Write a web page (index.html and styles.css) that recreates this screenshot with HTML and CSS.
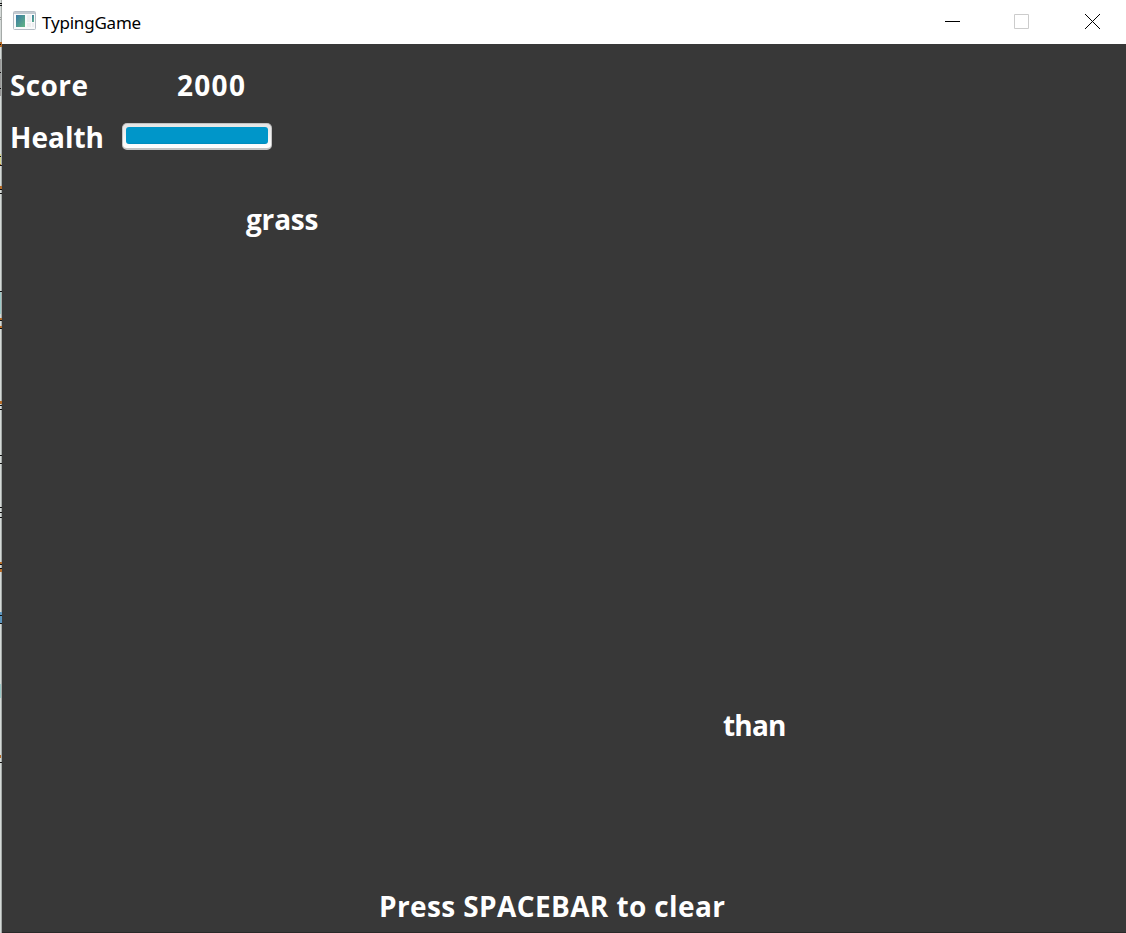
FILE: index.html
```
<!DOCTYPE html>
<html lang="en">
<head>
<meta charset="utf-8">
<title>TypingGame</title>
<link rel="stylesheet" href="styles.css">
</head>
<body>
<div class="screen">
  <svg class="desktop-edge" width="2" height="933" shape-rendering="crispEdges">
    <path fill="#d5dad8" d="M0 0h1v933H0z"/>
    <path fill="#a5aaa8" d="M1 0h1v933H1z"/>
    <path fill="#999" d="M0 17h1v1H0zM0 19h1v1H0zM0 59h1v37H0z"/>
    <path fill="#9ccac8" d="M0 292h1v22H0zM0 684h1v14H0z"/>
    <path fill="#d8d58a" d="M0 154h1v12H0z"/>
    <path fill="#5b94bd" d="M0 612h2v11H0z"/>
    <path fill="#b46a26" d="M0 42h2v5H0zM0 164h1v2H0zM0 186h2v3H0zM0 318h2v3H0zM0 326h2v3H0zM0 401h2v3H0zM0 562h2v3H0zM0 569h2v3H0zM0 755h1v3H0z"/>
    <path fill="#111" d="M0 3h2v1H0zM0 5h2v1H0zM0 44h1v1H0zM0 72h1v1H0zM0 88h1v1H0zM0 156h1v1H0zM0 165h2v1H0zM0 189h2v1H0zM0 193h2v1H0zM0 291h2v1H0zM0 320h2v1H0zM0 328h2v1H0zM0 405h2v1H0zM0 409h2v1H0zM0 455h2v1H0zM0 463h2v1H0zM0 507h2v1H0zM0 512h2v1H0zM0 517h2v1H0zM0 564h2v1H0zM0 568h2v1H0zM0 615h2v1H0zM0 623h2v1H0zM0 762h2v1H0z"/>
  </svg>
  <main class="window">
    <header class="titlebar">
      <svg class="app-icon" width="23" height="19" viewBox="0 0 23 19">
        <defs><linearGradient id="pane" x2="1" y2="1"><stop stop-color="#3979a5"/><stop offset="1" stop-color="#62b584"/></linearGradient></defs>
        <rect x=".5" y=".5" width="22" height="18" rx="1" fill="#f9fafb" stroke="#b4bcc5"/>
        <path d="M1 1h21v2H1z" fill="#c3cad1"/>
        <path d="M3 4h9v12H3z" fill="url(#pane)"/>
        <path d="M14 4h4v7h-4zM14 12h4v4h-4zM19 12h2v4h-2z" fill="#edeef0"/>
        <path d="M19 4h2v7h-2z" fill="url(#pane)"/>
      </svg>
      <span class="title">TypingGame</span>
      <svg class="controls" width="206" height="44" viewBox="0 0 206 44">
        <path d="M25 21.5h15" stroke="#000"/>
        <path d="M94.500 14.500h14v14h-14z" fill="none" stroke="#ccc"/>
        <path d="M165 14l15 15M180 14l-15 15" stroke="#000"/>
      </svg>
    </header>
    <section class="game">
      <div class="hud">
        <span class="label score">Score</span>
        <span class="label points">2000</span>
        <span class="label health">Health</span>
        <div class="meter"><div class="meter-fill"></div></div>
      </div>
      <span class="label word grass">grass</span>
      <span class="label word than">than</span>
      <p class="label hint">Press SPACEBAR to clear</p>
    </section>
  </main>
</div>
</body>
</html>
```
FILE: styles.css
```
body {
  margin: 0;
  overflow: hidden;
  font-family: "Open Sans", "Noto Sans", sans-serif;
}
.screen {
  display: flex;
  width: 1126px;
  height: 933px;
}
.desktop-edge { flex: none; }
.window {
  display: flex;
  flex-direction: column;
  flex: 1;
}
.titlebar {
  display: flex;
  height: 44px;
  background: #fff;
}
.app-icon { margin: 11px 0 0 11px; }
.title {
  margin-left: 6px;
  font-family: "Noto Sans", sans-serif;
  font-size: 17px;
  line-height: 45px;
  letter-spacing: -0.2px;
  color: #000;
}
.controls { margin-left: auto; }
.game {
  position: relative;
  display: flex;
  flex-direction: column;
  flex: 1;
  box-sizing: border-box;
  background: #383838;
  border-bottom: 1px solid #292929;
}
.hud {
  display: grid;
  grid-template-columns: 112px 150px;
  grid-template-rows: 40px 40px;
  row-gap: 12px;
  align-items: center;
  padding: 21px 0 0 8px;
}
.label {
  color: #fff;
  font-size: 28px;
  font-weight: 700;
  line-height: 40px;
  white-space: nowrap;
}
.score { letter-spacing: 0.4px; }
.points {
  padding-left: 55px;
  letter-spacing: 1.3px;
}
.meter {
  box-sizing: border-box;
  width: 150px;
  height: 27px;
  margin-top: -1px;
  padding: 3px;
  border: 1px solid #c3c3c3;
  border-bottom-width: 2px;
  border-radius: 5px;
  background: linear-gradient(#e4e4e4, #fff);
}
.meter-fill {
  width: 142px;
  height: 17px;
  border-radius: 3px;
  background: linear-gradient(#0096c9 0 90%, #0089ba);
}
.word { position: absolute; }
.grass {
  left: 244px;
  top: 155px;
  letter-spacing: -0.2px;
}
.than {
  left: 721px;
  top: 661px;
  letter-spacing: -0.8px;
}
.hint {
  margin: auto 0 6px 377px;
  letter-spacing: 0.38px;
}
```
